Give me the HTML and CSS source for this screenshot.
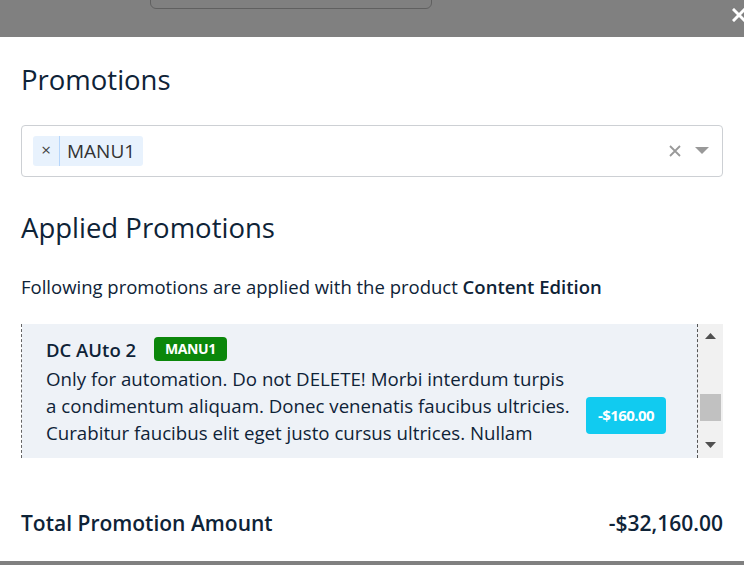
FILE: index.html
```html
<!DOCTYPE html>
<html>
<head>
<meta charset="utf-8">
<link rel="stylesheet" href="styles.css">
</head>
<body>
<div class="backdrop">
  <div class="behind-box"></div>
  <svg class="close-x" width="14" height="14" viewBox="0 0 14 14"><path d="M2 2 L12 12 M12 2 L2 12" stroke="#fff" stroke-width="3" stroke-linecap="square"/></svg>
  <div class="modal">
    <h2 class="title">Promotions</h2>
    <div class="select">
      <div class="tag"><span class="tag-x">×</span><span class="tag-label">MANU1</span></div>
      <div class="select-icons">
        <svg width="14" height="14" viewBox="0 0 14 14"><path d="M2 2 L12 12 M12 2 L2 12" stroke="#999" stroke-width="1.8"/></svg>
        <svg width="14" height="8" viewBox="0 0 14 8"><path d="M0 0 L14 0 L7 7 Z" fill="#999"/></svg>
      </div>
    </div>
    <h2 class="title applied">Applied Promotions</h2>
    <p class="intro">Following promotions are applied with the product <b>Content Edition</b></p>
    <div class="list">
      <div class="list-content">
        <div class="item">
          <div class="item-text">
            <div class="item-head"><span class="item-name">DC AUto 2</span><span class="code">MANU1</span></div>
            <div class="item-desc">Only for automation. Do not DELETE! Morbi interdum turpis a condimentum aliquam. Donec venenatis faucibus ultricies. Curabitur faucibus elit eget justo cursus ultrices. Nullam</div>
          </div>
          <div class="price">-$160.00</div>
        </div>
      </div>
      <div class="scrollbar">
        <svg width="11" height="6" viewBox="0 0 11 6"><path d="M0 6 L11 6 L5.5 0 Z" fill="#505050"/></svg>
        <div class="track"><div class="thumb"></div></div>
        <svg width="11" height="6" viewBox="0 0 11 6"><path d="M0 0 L11 0 L5.5 6 Z" fill="#505050"/></svg>
      </div>
    </div>
    <div class="total">
      <span>Total Promotion Amount</span>
      <span>-$32,160.00</span>
    </div>
  </div>
</div>
</body>
</html>
```
FILE: styles.css
```css
html, body {
  margin: 0;
  padding: 0;
}
body {
  font-family: "Open Sans", "Noto Sans", sans-serif;
  color: #0e2337;
  background: #808080;
  width: 744px;
  height: 565px;
  overflow: hidden;
}
.backdrop {
  position: relative;
  height: 565px;
  padding-top: 37px;
  box-sizing: border-box;
}
.behind-box {
  position: absolute;
  left: 150px;
  top: -20px;
  width: 280px;
  height: 27px;
  border: 1px solid #606060;
  border-radius: 6px;
}
.close-x {
  position: absolute;
  left: 732px;
  top: 8px;
}
.modal {
  background: #fff;
  height: 524px;
  padding: 0 21px;
  box-sizing: border-box;
  display: flex;
  flex-direction: column;
}
.title {
  margin: 0;
  font-weight: 400;
  font-size: 27.5px;
  line-height: 36px;
  margin-top: 25px;
}
.select {
  margin-top: 27px;
  height: 52px;
  border: 1px solid #cdd0d4;
  border-radius: 4px;
  box-sizing: border-box;
  display: flex;
  align-items: center;
  padding: 0 13px 0 11px;
}
.tag {
  display: flex;
  align-items: center;
  height: 30px;
  background: #e8f2fd;
  border-radius: 3px;
}
.tag-x {
  width: 26px;
  text-align: center;
  font-size: 17px;
  color: #444;
  border-right: 1px solid #b6d6fb;
  height: 30px;
  line-height: 28px;
}
.tag-label {
  font-size: 19px;
  color: #333;
  padding: 0 8px 0 7px;
  line-height: 30px;
}
.select-icons {
  margin-left: auto;
  display: flex;
  align-items: center;
  gap: 13px;
}
.applied {
  margin-top: 33px;
}
.intro {
  margin: 29px 0 0;
  font-size: 18.5px;
  line-height: 24px;
}
.intro b {
  font-weight: 600;
}
.list {
  margin-top: 25px;
  height: 134px;
  display: flex;
  border-left: 1px dashed #666;
  overflow: hidden;
}
.list-content {
  flex: 1;
  background: #eef2f7;
  border-right: 1px dashed #555;
  overflow: hidden;
}
.item {
  display: flex;
  align-items: center;
  padding: 12px 30px 0 24px;
}
.item-text {
  width: 526px;
}
.item-head {
  display: flex;
  align-items: center;
  height: 26px;
}
.item-name {
  font-weight: 600;
  font-size: 18.5px;
}
.code {
  margin-left: 18px;
  background: #0b870b;
  color: #fff;
  font-weight: 700;
  font-size: 14px;
  letter-spacing: -0.4px;
  border-radius: 4px;
  padding: 0 11px;
  height: 24px;
  line-height: 24px;
}
.item-desc {
  font-size: 18.7px;
  line-height: 27px;
  margin-top: 3px;
}
.price {
  margin-left: 14px;
  background: #11cbf0;
  color: #fff;
  font-weight: 700;
  font-size: 15px;
  letter-spacing: -0.6px;
  border-radius: 4px;
  width: 80px;
  height: 37px;
  line-height: 37px;
  text-align: center;
  margin-top: 48px;
}
.scrollbar {
  width: 25px;
  background: #f1f1f1;
  display: flex;
  flex-direction: column;
  align-items: center;
  padding: 9px 0 10px;
  box-sizing: border-box;
}
.track {
  flex: 1;
  width: 100%;
  position: relative;
}
.thumb {
  position: absolute;
  left: 2px;
  right: 2px;
  top: 55px;
  height: 27px;
  background: #c1c1c1;
}
.total {
  margin-top: auto;
  margin-bottom: 24px;
  display: flex;
  justify-content: space-between;
  font-weight: 600;
  font-size: 21px;
  line-height: 28px;
}
```
